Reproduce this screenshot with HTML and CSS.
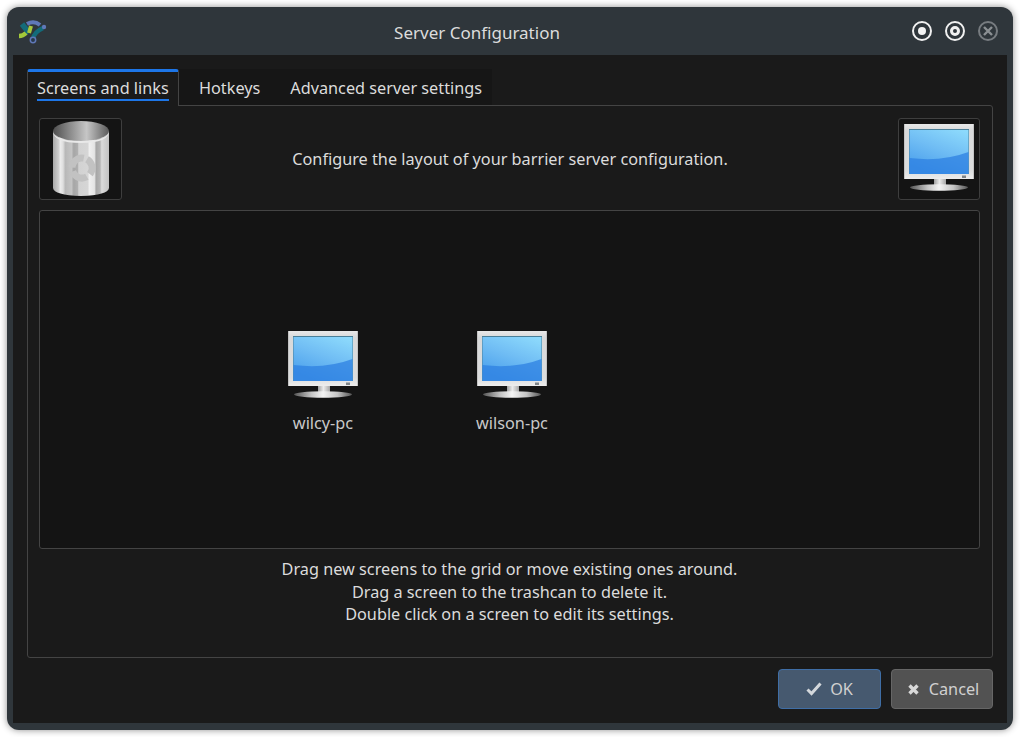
FILE: index.html
```html
<!DOCTYPE html>
<html lang="en">
<head>
    <meta charset="UTF-8">
    <meta name="viewport" content="width=device-width, initial-scale=1.0">
    <title>Server Configuration</title>
    <link rel="stylesheet" href="styles.css">
</head>
<body>
    <!-- Shared artwork -->
    <svg class="defs" width="0" height="0">
        <defs>
            <linearGradient id="bezel" x1="0" y1="0" x2="0" y2="1">
                <stop offset="0" stop-color="#e8e8e8"/>
                <stop offset="0.12" stop-color="#d8d9da"/>
                <stop offset="0.85" stop-color="#dcdddd"/>
                <stop offset="1" stop-color="#ededed"/>
            </linearGradient>
            <linearGradient id="glass" x1="0.9" y1="0" x2="0.4" y2="1">
                <stop offset="0" stop-color="#8ddafc"/>
                <stop offset="0.5" stop-color="#70bdf4"/>
                <stop offset="1" stop-color="#4ba0ec"/>
            </linearGradient>
            <linearGradient id="neck" x1="0" y1="0" x2="1" y2="0">
                <stop offset="0" stop-color="#a0a0a0"/>
                <stop offset="0.45" stop-color="#ececec"/>
                <stop offset="1" stop-color="#a6a6a6"/>
            </linearGradient>
            <linearGradient id="foot" x1="0" y1="0" x2="1" y2="0">
                <stop offset="0" stop-color="#555"/>
                <stop offset="0.3" stop-color="#c4c4c4"/>
                <stop offset="0.5" stop-color="#f4f4f4"/>
                <stop offset="0.75" stop-color="#c4c4c4"/>
                <stop offset="1" stop-color="#555"/>
            </linearGradient>
            <linearGradient id="can" x1="0" y1="0" x2="1" y2="0">
                <stop offset="0" stop-color="#a9a9a9"/>
                <stop offset="0.1" stop-color="#cfcfcf"/>
                <stop offset="0.13" stop-color="#ececec"/>
                <stop offset="0.18" stop-color="#dedede"/>
                <stop offset="0.22" stop-color="#b8b8b8"/>
                <stop offset="0.33" stop-color="#c4c4c4"/>
                <stop offset="0.37" stop-color="#a6a6a6"/>
                <stop offset="0.44" stop-color="#b0b0b0"/>
                <stop offset="0.46" stop-color="#d2d2d2"/>
                <stop offset="0.62" stop-color="#d6d6d6"/>
                <stop offset="0.65" stop-color="#efefef"/>
                <stop offset="0.74" stop-color="#e4e4e4"/>
                <stop offset="0.77" stop-color="#a6a6a6"/>
                <stop offset="0.84" stop-color="#b4b4b4"/>
                <stop offset="0.87" stop-color="#dadada"/>
                <stop offset="1" stop-color="#c2c2c2"/>
            </linearGradient>
            <linearGradient id="canInside" x1="0" y1="0" x2="1" y2="0">
                <stop offset="0" stop-color="#4e4e4e"/>
                <stop offset="0.6" stop-color="#c6c6c6"/>
                <stop offset="1" stop-color="#5a5a5a"/>
            </linearGradient>
            <symbol id="monitor" viewBox="0 0 70 67">
                <rect x="0" y="0" width="70" height="55" fill="url(#bezel)"/>
                <rect x="0" y="0" width="1" height="55" fill="#c4c4c4"/>
                <rect x="69" y="0" width="1" height="55" fill="#c4c4c4"/>
                <rect x="5" y="5" width="60" height="45" fill="#4a7f98"/>
                <rect x="5.500" y="6" width="59" height="44" fill="url(#glass)"/>
                <path d="M5.500 34Q38 38 64.500 28V50H5.500Z" fill="#2d80e2" opacity=".75"/>
                <rect x="58" y="51.500" width="4" height="2.500" fill="#7f8488"/>
                <rect x="30" y="55" width="12" height="7" fill="url(#neck)"/>
                <ellipse cx="35" cy="63.500" rx="29" ry="3.200" fill="url(#foot)"/>
            </symbol>
        </defs>
    </svg>

    <div class="window">
        <header class="titlebar">
            <svg class="app-logo" width="30" height="26" viewBox="0 0 30 26">
                <path d="M5 6l7 9" fill="none" stroke="#136b7a" stroke-width="5.500"/>
                <path d="M2 18q4 0 7-3" fill="none" stroke="#a3c93a" stroke-width="4.500"/>
                <path d="M12 15l2-7" fill="none" stroke="#a8c83c" stroke-width="4"/>
                <path d="M10 6q7-4 13 1" fill="none" stroke="#5f78b8" stroke-width="4"/>
                <path d="M16 21q1-7 10-11" fill="none" stroke="#136b7a" stroke-width="4.500"/>
                <circle cx="27" cy="9" r="2.200" fill="#5f78b8"/>
                <circle cx="16" cy="22" r="2.700" fill="#27384a" stroke="#5f78b8" stroke-width="1.500"/>
            </svg>
            <span class="title">Server Configuration</span>
            <div class="win-buttons">
                <span class="win-btn"><i class="dot-small"></i></span>
                <span class="win-btn"><i class="dot-ring"></i></span>
                <span class="win-btn win-close">
                    <svg width="10" height="10" viewBox="0 0 10 10"><path d="M1 1l8 8M9 1l-8 8" stroke="#8b9093" stroke-width="2.400"/></svg>
                </span>
            </div>
        </header>

        <main class="content">
            <nav class="tabs">
                <div class="tab active"><span>Screens and links</span></div>
                <div class="tab">Hotkeys</div>
                <div class="tab">Advanced server settings</div>
            </nav>

            <section class="panel">
                <div class="top-row">
                    <div class="icon-box icon-box-trash">
                        <svg width="56" height="78" viewBox="0 0 56 78">
                            <path d="M0 11V68Q1 75 28 76Q55 75 56 68V11Z" fill="url(#can)"/>
                            <ellipse cx="28" cy="11" rx="28" ry="10" fill="url(#canInside)"/>
                            <path d="M0 11Q0 21 28 21Q56 21 56 11Q56 23 28 23Q0 23 0 11Z" fill="#e9e9e9"/>
                            <circle cx="29" cy="48" r="10" fill="none" stroke="#c2c2c2" stroke-width="7" stroke-dasharray="17 4" transform="rotate(-60 29 48)"/>
                        </svg>
                    </div>
                    <p class="hint">Configure the layout of your barrier server configuration.</p>
                    <div class="icon-box">
                        <svg class="box-monitor" width="70" height="67"><use href="#monitor"/></svg>
                    </div>
                </div>

                <div class="grid-area">
                    <div class="screen screen-one">
                        <svg width="70" height="67"><use href="#monitor"/></svg>
                        <span>wilcy-pc</span>
                    </div>
                    <div class="screen screen-two">
                        <svg width="70" height="67"><use href="#monitor"/></svg>
                        <span>wilson-pc</span>
                    </div>
                </div>

                <div class="instructions">
                    <p>Drag new screens to the grid or move existing ones around.</p>
                    <p>Drag a screen to the trashcan to delete it.</p>
                    <p>Double click on a screen to edit its settings.</p>
                </div>
            </section>

            <footer class="actions">
                <button class="btn btn-ok">
                    <svg width="16" height="14" viewBox="0 0 16 14"><path d="M1.500 7.500l4 4 9-10" fill="none" stroke="#d4d8dc" stroke-width="3"/></svg>
                    OK
                </button>
                <button class="btn btn-cancel">
                    <svg width="11" height="11" viewBox="0 0 11 11"><path d="M1.500 1.500l8 8M9.500 1.500l-8 8" stroke="#d8d8d8" stroke-width="3.400"/></svg>
                    Cancel
                </button>
            </footer>
        </main>
    </div>
</body>
</html>
```

FILE: styles.css
```css
* {
    box-sizing: border-box;
}
html, body {
    height: 100%;
}
body {
    margin: 0;
    padding: 7px;
    overflow: hidden;
    background-color: #fff;
    font-family: "Noto Sans", sans-serif;
    font-size: 16.25px;
    color: #dcdcdc;
}
p {
    margin: 0;
}
.defs {
    display: block;
    height: 0;
}
.window {
    display: flex;
    flex-direction: column;
    width: 1006px;
    height: 723px;
    background-color: #2f363b;
    border-radius: 12px;
    box-shadow: 0 0 7px rgba(0, 0, 0, 0.45);
    overflow: hidden;
}
.titlebar {
    display: flex;
    align-items: center;
    flex: none;
    height: 48px;
    padding: 0 15px 0 10px;
}
.title {
    flex: 1;
    padding: 3px 5px 0 0;
    font-size: 17px;
    text-align: center;
}
.win-buttons {
    display: flex;
    gap: 13px;
}
.win-btn {
    display: flex;
    align-items: center;
    justify-content: center;
    width: 20px;
    height: 20px;
    border: 2px solid #f0f0f0;
    border-radius: 50%;
}
.win-close {
    border-color: #777c80;
}
.dot-small {
    width: 8px;
    height: 8px;
    background-color: #f4f4f4;
    border-radius: 50%;
}
.dot-ring {
    width: 10px;
    height: 10px;
    border: 3px solid #f0f0f0;
    border-radius: 50%;
}
.content {
    display: flex;
    flex-direction: column;
    flex: 1;
    margin: 0 6px 7px;
    padding: 14px 14px 14px;
    background-color: #1a1a1a;
}
.tabs {
    display: flex;
    align-items: stretch;
    align-self: flex-start;
    gap: 10px;
    height: 37px;
    margin-bottom: -1px;
    background-color: #161616;
}
.tab {
    padding: 9px 10px 0;
    line-height: 20px;
}
.tab.active {
    position: relative;
    z-index: 1;
    width: 152px;
    padding: 6px 9px 0;
    white-space: nowrap;
    background-color: #1a1a1a;
    border: 1px solid #444;
    border-top: 3px solid #1d76e8;
    border-bottom: 0;
    border-radius: 3px 3px 0 0;
}
.tab.active span {
    display: block;
    padding-bottom: 1px;
    border-bottom: 2px solid #1d76e8;
}
.panel {
    display: flex;
    flex-direction: column;
    flex: 1;
    padding: 12px 12px 0 11px;
    border: 1px solid #444;
    border-radius: 0 3px 3px 3px;
}
.top-row {
    display: flex;
    align-items: center;
    justify-content: space-between;
}
.icon-box {
    display: flex;
    align-items: center;
    justify-content: center;
    width: 82px;
    height: 82px;
    border: 1px solid #3e3e3e;
    border-radius: 3px;
    background-color: #141414;
}
.icon-box-trash {
    width: 83px;
}
.box-monitor {
    margin-top: -3px;
}
.hint {
    padding-bottom: 1px;
}
.grid-area {
    position: relative;
    height: 339px;
    margin-top: 10px;
    background-color: #141414;
    border: 1px solid #444;
    border-radius: 3px;
}
.screen {
    position: absolute;
    top: 120px;
    width: 100px;
    text-align: center;
}
.screen svg {
    display: block;
    margin: 0 auto 14px;
}
.screen span {
    display: block;
    line-height: 22px;
    color: #c9c9c9;
}
.screen-one {
    left: 233px;
}
.screen-two {
    left: 422px;
}
.instructions {
    margin-top: 9px;
    line-height: 22.500px;
    text-align: center;
}
.actions {
    display: flex;
    justify-content: flex-end;
    gap: 10px;
    margin-top: 11px;
}
.btn {
    display: flex;
    align-items: center;
    justify-content: center;
    gap: 8px;
    width: 103px;
    height: 40px;
    padding: 0;
    font: inherit;
    color: #d0d0d0;
    background-color: #525252;
    border: 1px solid #666;
    border-radius: 4px;
}
.btn-ok {
    background-color: #46596f;
    border-color: #3f6ea6;
}
.btn-cancel {
    gap: 10px;
    width: 102px;
    padding-left: 3px;
}
```
